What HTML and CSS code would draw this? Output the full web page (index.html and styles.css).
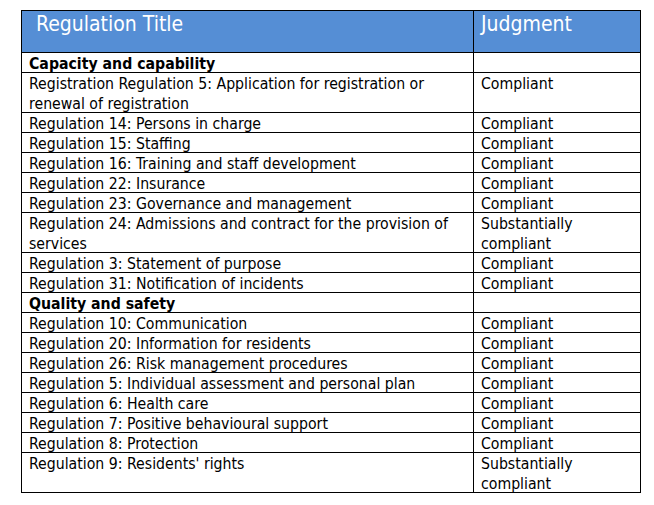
FILE: index.html
```html
<!DOCTYPE html>
<html>
<head>
<meta charset="utf-8">
<link rel="stylesheet" href="styles.css">
</head>
<body>
<table class="regs">
  <thead>
    <tr>
      <th class="h-title">Regulation Title</th>
      <th class="h-judg">Judgment</th>
    </tr>
  </thead>
  <tbody>
    <tr class="section"><td><div class="c">Capacity and capability</div></td><td><div class="c"></div></td></tr>
    <tr><td><div class="c">Registration Regulation 5: Application for registration or renewal of registration</div></td><td><div class="c">Compliant</div></td></tr>
    <tr><td><div class="c">Regulation 14: Persons in charge</div></td><td><div class="c">Compliant</div></td></tr>
    <tr><td><div class="c">Regulation 15: Staffing</div></td><td><div class="c">Compliant</div></td></tr>
    <tr><td><div class="c">Regulation 16: Training and staff development</div></td><td><div class="c">Compliant</div></td></tr>
    <tr><td><div class="c">Regulation 22: Insurance</div></td><td><div class="c">Compliant</div></td></tr>
    <tr><td><div class="c">Regulation 23: Governance and management</div></td><td><div class="c">Compliant</div></td></tr>
    <tr><td><div class="c">Regulation 24: Admissions and contract for the provision of services</div></td><td><div class="c">Substantially compliant</div></td></tr>
    <tr><td><div class="c">Regulation 3: Statement of purpose</div></td><td><div class="c">Compliant</div></td></tr>
    <tr><td><div class="c">Regulation 31: Notification of incidents</div></td><td><div class="c">Compliant</div></td></tr>
    <tr class="section"><td><div class="c">Quality and safety</div></td><td><div class="c"></div></td></tr>
    <tr><td><div class="c">Regulation 10: Communication</div></td><td><div class="c">Compliant</div></td></tr>
    <tr><td><div class="c">Regulation 20: Information for residents</div></td><td><div class="c">Compliant</div></td></tr>
    <tr><td><div class="c">Regulation 26: Risk management procedures</div></td><td><div class="c">Compliant</div></td></tr>
    <tr><td><div class="c">Regulation 5: Individual assessment and personal plan</div></td><td><div class="c">Compliant</div></td></tr>
    <tr><td><div class="c">Regulation 6: Health care</div></td><td><div class="c">Compliant</div></td></tr>
    <tr><td><div class="c">Regulation 7: Positive behavioural support</div></td><td><div class="c">Compliant</div></td></tr>
    <tr><td><div class="c">Regulation 8: Protection</div></td><td><div class="c">Compliant</div></td></tr>
    <tr><td><div class="c">Regulation 9: Residents' rights</div></td><td><div class="c">Substantially compliant</div></td></tr>
  </tbody>
</table>
</body>
</html>
```
FILE: styles.css
```css
html, body {
  margin: 0;
  padding: 0;
  background: #ffffff;
}
body {
  font-family: "DejaVu Sans Condensed", "DejaVu Sans", sans-serif;
  color: #000000;
}
.regs {
  border-collapse: collapse;
  margin: 10px 0 0 21px;
  width: 620px;
  table-layout: fixed;
}
.regs th,
.regs td {
  border: 1px solid #000000;
  vertical-align: top;
  text-align: left;
}
.regs th {
  background: #558ed5;
  color: #ffffff;
  font-weight: normal;
  font-size: 21px;
  line-height: 26px;
  padding: 0 7px 15px 7px;
}
.regs th.h-title {
  width: 452px;
  box-sizing: border-box;
  padding-left: 14px;
}
.regs td {
  font-size: 15.7px;
  line-height: 20px;
  padding: 1px 7px 0 7px;
}
.regs td .c {
  margin-bottom: -2px;
  min-height: 20px;
}
.regs tr.section td {
  font-weight: bold;
}
```
